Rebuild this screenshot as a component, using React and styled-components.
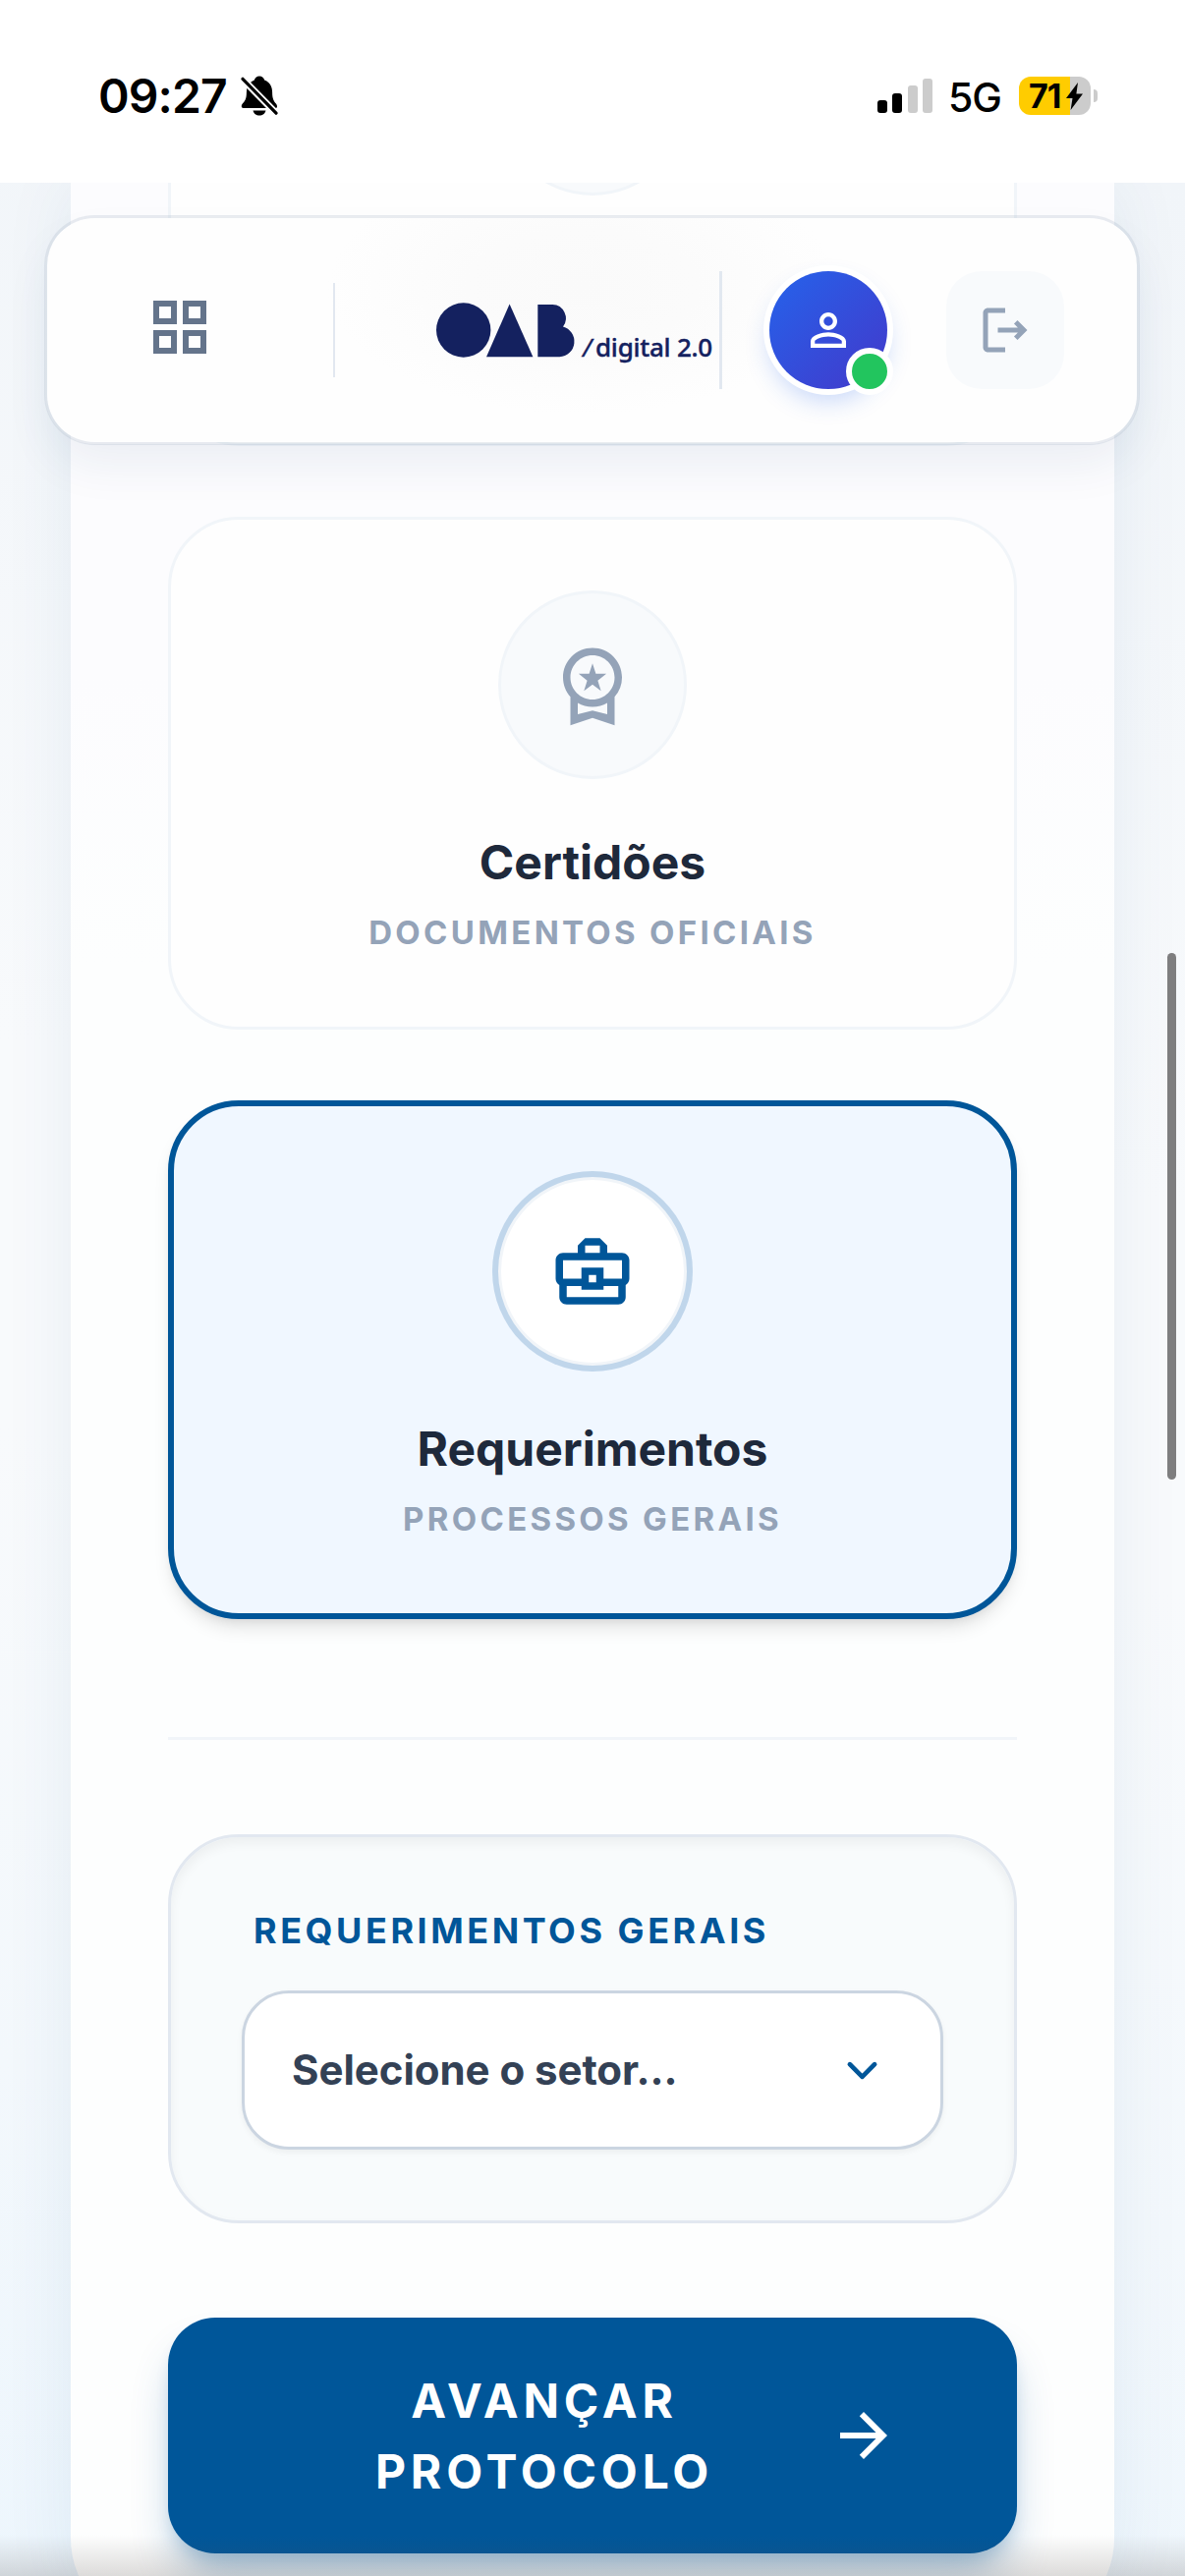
import React, { useState } from "react";
import styled, { createGlobalStyle, css } from "styled-components";
import {
    MdOutlineGridView,
    MdPersonOutline,
    MdOutlineLogout,
    MdOutlineWorkspacePremium,
    MdOutlineBusinessCenter,
    MdArrowForward,
} from "react-icons/md";

const services = [
    { id: "certidoes", title: "Certidões", sub: "Documentos oficiais", Icon: MdOutlineWorkspacePremium },
    { id: "requerimentos", title: "Requerimentos", sub: "Processos gerais", Icon: MdOutlineBusinessCenter },
];

const Logo = () => (
    <LogoWrap>
        <svg width="142" height="56" viewBox="0 0 142 56" fill="#14215f">
            <circle cx="27.7" cy="28" r="27.7" />
            <path d="M74.6 1.500 98.4 55.300H51z" />
            <path d="M103.300 2h15a14 14 0 0 1 10.700 22.500A15.700 15.700 0 0 1 125.500 55.300H103.300z" />
        </svg>
        <LogoText><i>/</i>digital 2.0</LogoText>
    </LogoWrap>
);

const StatusBar = () => (
    <Status>
        <StatusSide>
            <Clock>09:27</Clock>
            <svg width="38" height="41" viewBox="0 0 38 41">
                <path d="M19 .5c2.700 0 4.700 1.700 5.100 4 5.400 2 8 6.500 8 12.500 0 6.500 1.500 9 4 11.700 1.300 1.500 1.400 4.300-.8 4.300H2.700c-2.300 0-2.500-2.800-.9-4.500 2.600-2.800 4.100-5 4.100-11.500 0-6 2.600-10.500 8-12.500.4-2.300 2.400-4 5.100-4zM12.500 35.500h13c-.6 3-3.300 5-6.500 5s-5.900-2-6.500-5z" />
                <path d="M1 2.500 37 39.300" stroke="#fff" strokeWidth="7" />
                <path d="M2 3.300 36 38.200" stroke="#000" strokeWidth="3.200" strokeLinecap="round" />
            </svg>
        </StatusSide>
        <StatusSide>
            <Signal>
                <Bar $h={13} $on />
                <Bar $h={20} $on />
                <Bar $h={28} />
                <Bar $h={35} />
            </Signal>
            <Network>5G</Network>
            <Battery>
                <BatteryBody>
                    <span>71</span>
                    <svg width="17" height="28" viewBox="0 0 17 25" preserveAspectRatio="none">
                        <path d="M12 0 0 14.200h6.500L4.600 25 17 10.300h-6.600z" />
                    </svg>
                </BatteryBody>
                <BatteryTip />
            </Battery>
        </StatusSide>
    </Status>
);

const App = () => {
    const [active, setActive] = useState("requerimentos");

    return (
        <Screen>
            <GlobalStyle />
            <StatusBar />
            <Viewport>
                <Panel>
                    <PrevCard>
                        <IconCircle />
                    </PrevCard>
                    {services.map(({ id, title, sub, Icon }) => (
                        <Card key={id} $active={active === id} onClick={() => setActive(id)}>
                            <IconCircle $active={active === id}>
                                <Icon size={90} />
                            </IconCircle>
                            <CardTitle>{title}</CardTitle>
                            <CardSub>{sub}</CardSub>
                        </Card>
                    ))}
                    <Divider />
                    <FormBox>
                        <Label>Requerimentos gerais</Label>
                        <Select>
                            <span>Selecione o setor...</span>
                            <svg width="63" height="63" viewBox="0 0 20 20" fill="none" stroke="#005699" strokeWidth="1.5" strokeLinecap="round" strokeLinejoin="round">
                                <path d="m6 8 4 4 4-4" />
                            </svg>
                        </Select>
                    </FormBox>
                    <Submit>
                        <SubmitText>Avançar protocolo</SubmitText>
                        <MdArrowForward size={72} />
                    </Submit>
                </Panel>
            </Viewport>
            <Header>
                <MenuBtn><MdOutlineGridView size={72} /></MenuBtn>
                <Line $h={96} $w={2} />
                <Logo />
                <Line $h={120} $w={3} />
                <Avatar>
                    <MdPersonOutline size={54} />
                    <Online />
                </Avatar>
                <LogoutBtn><MdOutlineLogout size={60} /></LogoutBtn>
            </Header>
            <ScrollThumb />
            <BottomShade />
        </Screen>
    );
};

const GlobalStyle = createGlobalStyle`
    * { box-sizing:border-box; }
    body { margin:0; }
    button { font:inherit; border:0; padding:0; margin:0; }
    svg { display:block; flex-shrink:0; }
`;

const Screen = styled.div`
    position:relative; width:1206px; height:2622px; overflow:hidden;
    font-family:Inter, "Liberation Sans", sans-serif; background:#fff;
`;

const Status = styled.div`
    display:flex; height:186px; padding:72px 89px 0 100px; align-items:flex-start; justify-content:space-between; background:#fff;
`;

const StatusSide = styled.div`
    display:flex; height:51px; align-items:center;
`;

const Clock = styled.span`
    width:145px; font-size:48px; font-weight:600; line-height:51px; letter-spacing:-0.9px; color:#000;
`;

const Signal = styled.div`
    display:flex; gap:5.500px; align-items:flex-end; margin-right:16px;
`;

const Bar = styled.span`
    width:10px; height:${props=>props.$h}px; border-radius:3px;
    background:${props=>props.$on?'#000':'#ccc'};
`;

const Network = styled.span`
    width:72px; font-size:41px; font-weight:500; line-height:51px; letter-spacing:-1px; padding-top:3px;
`;

const Battery = styled.div`
    display:flex; align-items:center; gap:3px;
`;

const BatteryBody = styled.div`
    display:flex; width:73px; height:39px; padding-left:10px; align-items:center; border-radius:12px;
    background:linear-gradient(90deg, #ffcc00 52px, #ccc 52px);
    font-size:34px; font-weight:700; letter-spacing:-1px;
    span { width:38px; }
`;

const BatteryTip = styled.span`
    width:4px; height:13px; border-radius:0 6px 6px 0; background:#ccc;
`;

const Viewport = styled.div`
    height:2436px; padding:0 72px; overflow:hidden;
    background:linear-gradient(188deg, #f1f5f9 0%, #f8fafc 40%, #f8fafc 55%, #f3f8fc 80%, #edf6fd 100%);
`;

const Panel = styled.main`
    display:flex; flex-direction:column; height:2493px; padding:0 99px; border-radius:0 0 96px 96px;
    background:linear-gradient(180deg, #fcfcfe 0, #fcfcfe 500px, #fdfefe 800px);
    box-shadow:0 0 75px rgba(15,75,130,.075);
`;

const Card = styled.button`
    display:flex; flex-direction:column; align-items:center; margin-bottom:72px; padding:72px 0;
    border-radius:72px; border:3px solid #f1f5f9; background:#fefefe; cursor:pointer;
    ${props=>props.$active && css`
        border:6px solid #005699; background:#f0f7ff; margin-bottom:120px;
        box-shadow:0 12px 18px -3px rgba(0,0,0,.1), 0 6px 12px -6px rgba(0,0,0,.1);
    `}
`;

/* tail of the card scrolled under the header */
const PrevCard = styled.div`
    display:flex; height:268px; margin-bottom:72px; justify-content:center; align-items:flex-start; flex-shrink:0;
    border:3px solid #f1f5f9; border-top:0; border-radius:0 0 72px 72px; background:#fefefe;
    > div { margin-top:-179px; }
`;

const IconCircle = styled.div`
    display:flex; width:192px; height:192px; flex-shrink:0; align-items:center; justify-content:center;
    border-radius:50%; border:3px solid #f1f5f9;
    background:${props=>props.$active?'#fff':'#f8fafc'};
    color:${props=>props.$active?'#005699':'#94a3b8'};
    box-shadow:${props=>props.$active?'0 0 0 6px rgba(0,86,153,.2)':'none'};
`;

const CardTitle = styled.span`
    margin-top:49px; font-size:48px; font-weight:700; line-height:72px; color:#1e293b;
`;

const CardSub = styled.span`
    margin-top:11px; font-size:33px; font-weight:700; line-height:48px; letter-spacing:3.300px; text-transform:uppercase; color:#94a3b8;
`;

const Divider = styled.hr`
    width:100%; height:3px; margin:0 0 96px; border:0; flex-shrink:0; background:#f1f5f9;
`;

const FormBox = styled.div`
    padding:72px; border:3px solid #e2e8f0; border-radius:72px; background:#f8fbfc;
    box-shadow:inset 0 6px 12px rgba(0,0,0,.05);
`;

const Label = styled.div`
    padding-left:12px; margin-bottom:37px; font-size:36px; font-weight:700; line-height:47px; letter-spacing:3.540px;
    text-transform:uppercase; color:#005699;
`;

const Select = styled.div`
    display:flex; height:162px; padding:0 48px; align-items:center; justify-content:space-between;
    border:3px solid #cbd5e1; border-radius:48px; background:#fff; box-shadow:0 3px 6px rgba(0,0,0,.05);
    font-size:42px; font-weight:700; color:#334155;
    span { padding-bottom:2px; letter-spacing:-0.050px; }
`;

const Submit = styled.button`
    display:flex; height:240px; margin-top:96px; padding-right:120px; align-items:center; justify-content:flex-end; gap:36px; flex-shrink:0;
    border-radius:48px; color:#fff; background:#005699; cursor:pointer;
    box-shadow:0 30px 45px -9px rgba(0,86,153,.3), 0 12px 18px -6px rgba(0,86,153,.2);
`;

const SubmitText = styled.span`
    width:506px; padding-top:2px; font-size:48px; font-weight:700; line-height:72px; letter-spacing:4.800px; text-transform:uppercase; text-align:center;
`;

const Header = styled.header`
    position:absolute; top:219px; left:45px; width:1115px; height:234px; display:flex; align-items:center; padding-right:74px;
    border:3px solid rgba(148,163,184,.2); border-radius:51px; background-clip:padding-box;
    background-color:#fefefe;
    background-image:radial-gradient(ellipse 260px 130px at 545px 70px, #fafafa 0%, #fbfbfb 45%, rgba(254,254,254,0) 100%);
    box-shadow:0 24px 48px -6px rgba(30,58,110,.08);
`;

const MenuBtn = styled.button`
    width:291px; height:78px; padding:0 0 6px 99px; background:none; color:#64748b;
`;

const Line = styled.span`
    width:${props=>props.$w}px; height:${props=>props.$h}px; flex-shrink:0; background:#e2e8f0;
`;

const LogoWrap = styled.div`
    display:flex; width:391px; padding-left:102.500px; align-items:flex-end;
`;

const LogoText = styled.span`
    margin-left:7.500px; padding-bottom:2px; font-family:"Noto Sans", sans-serif; font-size:26px; font-weight:500; line-height:18px;
    letter-spacing:-0.250px; white-space:nowrap; color:#14215f; -webkit-text-stroke:0.4px #14215f;
    i { display:inline-block; width:13px; font-weight:400; }
`;

const Avatar = styled.div`
    position:relative; display:flex; width:120px; height:120px; margin:0 60px 0 48px; flex-shrink:0; align-items:center; justify-content:center;
    border-radius:50%; color:#fff; background:linear-gradient(135deg, #2563eb, #4338ca);
    box-shadow:0 0 0 6px #fff, 0 12px 24px rgba(37,99,235,.25);
`;

const Online = styled.span`
    position:absolute; right:-6px; bottom:-6px; width:48px; height:48px; border:6px solid #fff; border-radius:50%; background:#22c55e;
`;

const LogoutBtn = styled.button`
    display:flex; width:120px; height:120px; flex-shrink:0; align-items:center; justify-content:center;
    border-radius:36px; background:#f8fafc; color:#94a3b8;
`;

const ScrollThumb = styled.div`
    position:absolute; top:970px; right:9px; width:9px; height:536px; border-radius:5px; background:#7e7e7f;
`;

const BottomShade = styled.div`
    position:absolute; left:0; right:0; bottom:0; height:42px; pointer-events:none;
    background:linear-gradient(180deg, rgba(90,80,75,0), rgba(90,80,75,.2));
`;

export default App;
